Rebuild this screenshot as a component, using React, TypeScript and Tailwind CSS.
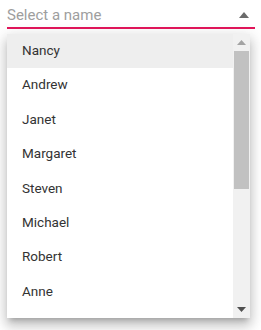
import React from "react";

const names = ["Nancy", "Andrew", "Janet", "Margaret", "Steven", "Michael", "Robert", "Anne"];

export default function App() {
  return (
    <div className="w-[261px] h-[330px] bg-white relative" style={{ fontFamily: "Roboto, 'Liberation Sans', sans-serif" }}>
      <div className="pl-[7px] pr-[6px] pt-[4px]">
        <div className="flex items-center h-[25px] border-b-2 border-[#e3165b]">
          <span className="flex-1 text-[15px] text-[#9e9e9e] leading-[20px] pb-[2px]">Select a name</span>
          <svg width="10" height="6" viewBox="0 0 10 6" className="mr-[6px] mb-[2px]">
            <path d="M0 6 L5 0 L10 6 Z" fill="#6b6b6b" />
          </svg>
        </div>
      </div>
      <div className="absolute left-[7px] top-[34px] w-[243px] h-[284px] bg-white flex overflow-hidden shadow-[0_5px_5px_-3px_rgba(0,0,0,0.2),0_8px_10px_1px_rgba(0,0,0,0.14),0_3px_14px_2px_rgba(0,0,0,0.12)]">
        <div className="flex-1 flex flex-col">
          {names.map((n, i) => (
            <div
              key={n}
              className={`h-[34.4px] shrink-0 flex items-center pl-[15px] pb-[2px] text-[13.5px] text-[#333333] ${i === 0 ? "bg-[#eeeeee]" : ""}`}
            >
              {n}
            </div>
          ))}
        </div>
        <div className="w-[17px] h-full bg-[#f1f1f1] flex flex-col items-center">
          <div className="h-[17px] w-full flex items-center justify-center">
            <svg width="9" height="5" viewBox="0 0 9 5"><path d="M0 5 L4.5 0 L9 5 Z" fill="#a3a3a3" /></svg>
          </div>
          <div className="w-[15px] h-[138px] bg-[#c1c1c1]" />
          <div className="flex-1" />
          <div className="h-[17px] w-full flex items-center justify-center">
            <svg width="9" height="5" viewBox="0 0 9 5"><path d="M0 0 L4.5 5 L9 0 Z" fill="#505050" /></svg>
          </div>
        </div>
      </div>
    </div>
  );
}
